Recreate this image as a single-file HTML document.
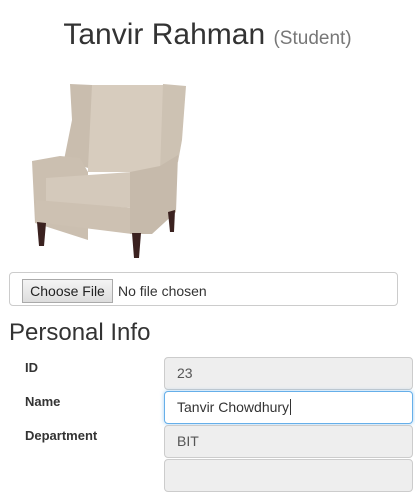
<!DOCTYPE html>
<html><head><style>
body{margin:0;background:#fff;font-family:"Liberation Sans",sans-serif;color:#333;width:415px;height:464px;overflow:hidden;position:relative}
.a{position:absolute}
h1{position:absolute;left:0;width:415px;top:15px;margin:0;text-align:center;font-weight:normal;font-size:30px;line-height:40px;color:#333}
h1 small{font-size:19px;color:#777}
.file{left:9px;top:272px;width:387px;height:32px;border:1px solid #ccc;border-radius:4px}
.btn{left:22px;top:279px;height:24px;border:1px solid #aaa;background:linear-gradient(#f4f4f4,#ddd);font-size:14px;line-height:22px;text-align:center;color:#222;box-sizing:border-box;width:91px}
.nf{left:118px;top:283px;font-size:14px;color:#333}
.pi{left:9px;top:319px;font-size:24px;color:#333}
.lbl{left:25px;font-size:13px;font-weight:bold;color:#333}
.in{left:164px;width:249px;height:33px;border:1px solid #ccc;border-radius:4px;background:#eee;box-sizing:border-box;font-size:14px;line-height:31px;padding-left:12px;color:#555}
</style></head><body>
<h1>Tanvir Rahman <small>(Student)</small></h1>
<svg class="a" style="left:0;top:0" width="200" height="265">
<polygon points="88,85 165,85 166,172 88,172" fill="#d7ccbe"/>
<polygon points="70,84 92,85 88,168 64,160 72,120" fill="#c9bdae"/>
<polygon points="163,84 186,86 182,140 178,162 160,172" fill="#cdc2b3"/>
<polygon points="32,161 60,156 80,158 88,172 88,240 35,223" fill="#cbbfb0"/>
<polygon points="46,178 132,172 132,208 46,202" fill="#d4c9bb"/>
<polygon points="36,200 132,208 132,234 36,222" fill="#cdc1b2"/>
<polygon points="130,172 160,166 178,155 176,212 152,234 130,234" fill="#c6baab"/>
<polygon points="37,222 46,223 44,246 39,246" fill="#3b2220"/>
<polygon points="132,233 141,233 139,258 134,258" fill="#3b2220"/>
<polygon points="168,212 175,210 174,232 170,232" fill="#3b2220"/>
</svg>
<div class="a file"></div>
<div class="a btn">Choose File</div>
<div class="a nf">No file chosen</div>
<div class="a pi">Personal Info</div>
<div class="a lbl" style="top:360px">ID</div>
<div class="a lbl" style="top:394px">Name</div>
<div class="a lbl" style="top:428px">Department</div>
<div class="a in" style="top:357px">23</div>
<div class="a in" style="top:391px;background:#fff;border-color:#66afe9;box-shadow:0 0 4px rgba(102,175,233,.6);color:#333">Tanvir Chowdhury<span style="border-left:1px solid #333;margin-left:1px"></span></div>
<div class="a in" style="top:425px">BIT</div>
<div class="a in" style="top:459px"></div>
</body></html>
